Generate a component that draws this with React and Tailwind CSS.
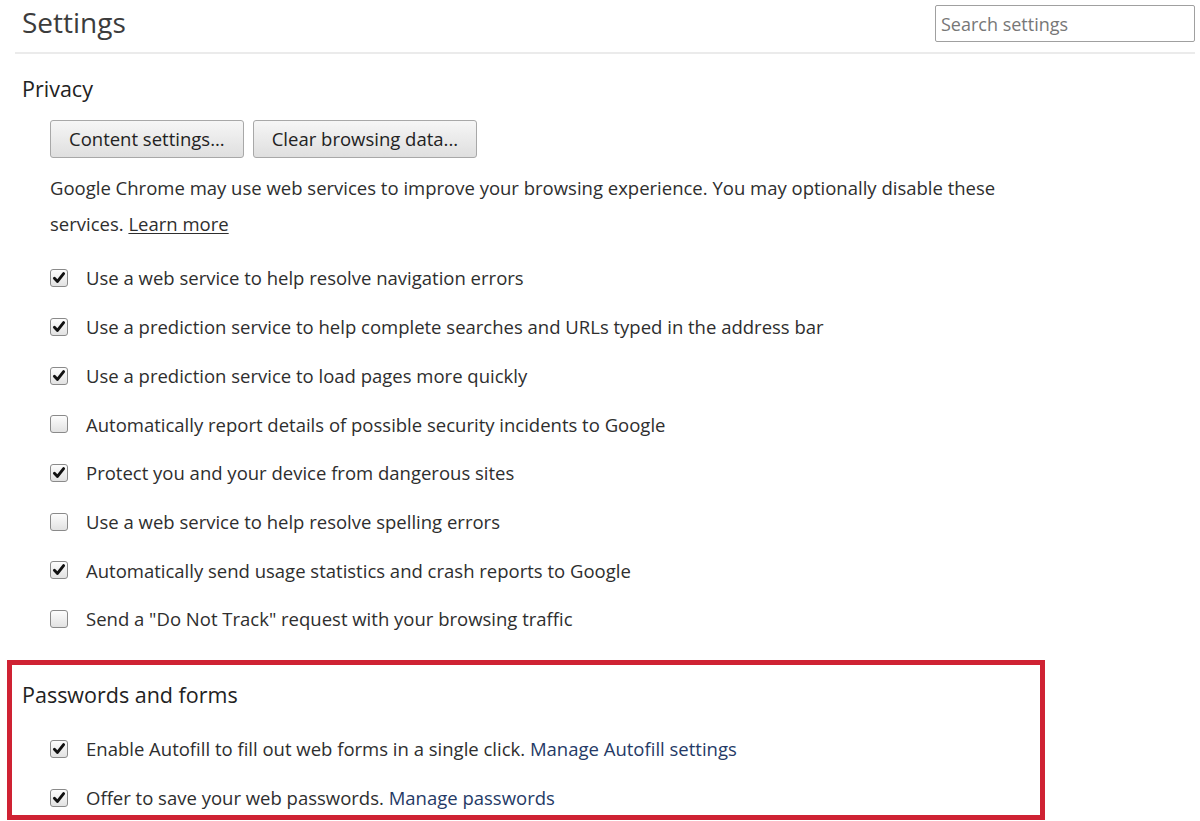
import { useState } from 'react'

const PRIVACY = [
  ['Use a web service to help resolve navigation errors', true],
  ['Use a prediction service to help complete searches and URLs typed in the address bar', true],
  ['Use a prediction service to load pages more quickly', true],
  ['Automatically report details of possible security incidents to Google', false],
  ['Protect you and your device from dangerous sites', true],
  ['Use a web service to help resolve spelling errors', false],
  ['Automatically send usage statistics and crash reports to Google', true],
  ['Send a "Do Not Track" request with your browsing traffic', false],
]

function Box({ checked, onClick }) {
  return (
    <button
      onClick={onClick}
      className="w-[18px] h-[18px] shrink-0 rounded-[3px] border border-[#8a8a8a] bg-gradient-to-b from-[#fdfdfd] to-[#e2e2e2] flex items-center justify-center"
    >
      {checked && (
        <svg width="14" height="14" viewBox="0 0 14 14">
          <path d="M2.4 7.2 L5.5 10.4 L11.6 2.6" fill="none" stroke="#111" strokeWidth="2.9" strokeLinecap="round" strokeLinejoin="round" />
        </svg>
      )}
    </button>
  )
}

function Row({ label, checked, onToggle, children }) {
  return (
    <div className="h-[48.7px] flex items-center pl-[50px]">
      <Box checked={checked} onClick={onToggle} />
      <span className="ml-[18px]">
        {label}
        {children}
      </span>
    </div>
  )
}

export default function App() {
  const [privacy, setPrivacy] = useState(PRIVACY.map(p => p[1]))
  const [autofill, setAutofill] = useState(true)
  const [passwords, setPasswords] = useState(true)

  function toggle(i) {
    setPrivacy(prev => prev.map((v, j) => (j === i ? !v : v)))
  }

  return (
    <div className="w-[1200px] h-[821px] overflow-hidden bg-white text-[18.5px] text-[#2e2e2e] font-['Open_Sans',sans-serif]">
      <div className="ml-[15px] mr-[5px] h-[54px] border-b-2 border-[#ebebeb] flex items-start justify-between">
        <h1 className="pl-[7px] text-[28px] leading-[44px] text-[#3c3c3c]">Settings</h1>
        <input
          placeholder="Search settings"
          className="mt-[5px] w-[260px] h-[37px] border border-[#a0a0a0] rounded-[2px] px-[5px] text-[18px] text-[#333] placeholder:text-[#777] outline-none"
        />
      </div>

      <div className="pl-[22px] pt-[21px] text-[21.5px] leading-[28px] text-[#222]">Privacy</div>

      <div className="pl-[50px] mt-[17px] flex gap-[9px]">
        <button className="h-[38px] px-[18px] rounded-[3px] border border-[#a8a8a8] bg-gradient-to-b from-[#f6f6f6] to-[#dfdfdf] text-[#222]">Content settings...</button>
        <button className="h-[38px] px-[18px] rounded-[3px] border border-[#a8a8a8] bg-gradient-to-b from-[#f6f6f6] to-[#dfdfdf] text-[#222]">Clear browsing data...</button>
      </div>

      <p className="ml-[50px] w-[970px] mt-[12px] leading-[36px]">
        Google Chrome may use web services to improve your browsing experience. You may optionally disable these services.{' '}
        <a href="#" className="underline underline-offset-2">Learn more</a>
      </p>

      <div className="mt-[12px]">
        {PRIVACY.map(([label], i) => (
          <Row key={label} label={label} checked={privacy[i]} onToggle={() => toggle(i)} />
        ))}
      </div>

      <div className="ml-[7px] mt-[16px] w-[1038px] h-[160px] border-[5px] border-[#cf2233]">
        <div className="pl-[10px] pt-[16px] text-[21.5px] leading-[28px] text-[#222]">Passwords and forms</div>
        <div className="-ml-[12px] mt-[16px]">
          <Row label="Enable Autofill to fill out web forms in a single click. " checked={autofill} onToggle={() => setAutofill(!autofill)}>
            <a href="#" className="text-[#253a66]">Manage Autofill settings</a>
          </Row>
          <Row label="Offer to save your web passwords. " checked={passwords} onToggle={() => setPasswords(!passwords)}>
            <a href="#" className="text-[#253a66]">Manage passwords</a>
          </Row>
        </div>
      </div>
    </div>
  )
}
